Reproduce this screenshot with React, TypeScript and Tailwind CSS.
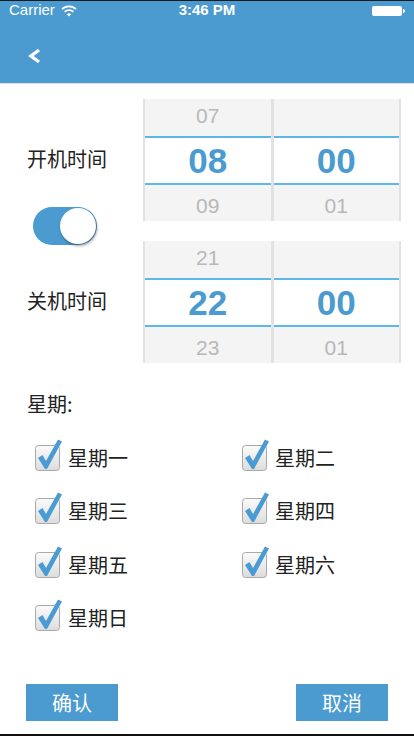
import React from "react";

function Check() {
  return (
    <svg width="30" height="34" viewBox="0 0 30 34" className="shrink-0">
      <defs>
        <linearGradient id="cbg" x1="0" y1="0" x2="0" y2="1">
          <stop offset="0" stopColor="#fbfbfb" />
          <stop offset="1" stopColor="#dcdcdc" />
        </linearGradient>
      </defs>
      <rect x="1.5" y="7.5" width="24" height="25" rx="3" fill="url(#cbg)" stroke="#a9a9a9" strokeWidth="1" />
      <path d="M4 20 L8.5 17 L12 23 L24 1.5 L28 3.5 L13 31 L11 31 Z" fill="#4a9bd3" />
    </svg>
  );
}

function Picker({ top, sel, bottom, min, minBottom, minTop }: { top: string; sel: string; bottom: string; min: string; minBottom: string; minTop: string }) {
  const col = (t: string, s: string, b: string) => (
    <div className="flex flex-1 flex-col">
      <div className="flex h-[37px] items-center justify-center bg-[#f4f4f4] pb-[4px] text-[21px] text-[#b8b8b8]">{t}</div>
      <div className="h-[2px] bg-[#5bb9e9]" />
      <div className="flex h-[45px] items-center justify-center bg-white text-[35px] font-bold leading-none text-[#4a9bd0]">{s}</div>
      <div className="h-[2px] bg-[#5bb9e9]" />
      <div className="flex h-[36px] items-center justify-center bg-[#f4f4f4] pt-[6px] text-[21px] text-[#b8b8b8]">{b}</div>
    </div>
  );
  return (
    <div className="flex h-[122px] w-[258px] gap-[3px] border-x-2 border-[#e2e2e2] bg-[#e2e2e2]" style={{ fontFamily: '"Liberation Sans", Arial, sans-serif' }}>
      {col(top, sel, bottom)}
      {col(minTop, min, minBottom)}
    </div>
  );
}

export default function App() {
  const days = ["星期一", "星期二", "星期三", "星期四", "星期五", "星期六", "星期日"];
  return (
    <div className="flex h-[736px] w-[414px] flex-col overflow-hidden bg-white" style={{ fontFamily: '"Noto Sans CJK SC", "Liberation Sans", sans-serif' }}>
      <div className="h-px bg-[#1a1a1a]" />
      <div className="flex h-[82px] flex-col bg-[#4b9bd0]">
        <div className="relative flex h-[19px] items-center px-[9px] text-[15px] text-white" style={{ fontFamily: '"Liberation Sans", Arial, sans-serif' }}>
          <span>Carrier</span>
          <svg width="16" height="12" viewBox="0 0 16 12" className="ml-[6px]">
            <path d="M1 4.2 A10 10 0 0 1 15 4.2" stroke="white" strokeWidth="1.8" fill="none" />
            <path d="M3.6 6.8 A6.5 6.5 0 0 1 12.4 6.8" stroke="white" strokeWidth="1.8" fill="none" />
            <path d="M8 11.5 L5.8 9.2 A3.2 3.2 0 0 1 10.2 9.2 Z" fill="white" />
          </svg>
          <span className="absolute left-0 right-0 text-center font-bold">3:46 PM</span>
          <div className="ml-auto flex items-center">
            <div className="h-[10px] w-[30px] rounded-[2px] bg-white" />
            <div className="ml-px h-[4px] w-[2px] rounded-r-sm bg-white" />
          </div>
        </div>
        <div className="flex flex-1 items-center pl-[26px] pt-[8px]">
          <svg width="16" height="16" viewBox="0 0 16 16">
            <path d="M13 2 L5 8 L13 14" stroke="white" strokeWidth="3.4" fill="none" strokeLinejoin="miter" />
          </svg>
        </div>
      </div>
      <div className="h-px bg-[#dcdcdc]" />

      <div className="mt-[15px] flex">
        <div className="flex w-[143px] flex-col pl-[27px]">
          <div className="mt-[46px] text-[20px] leading-[28px] text-[#222]">开机时间</div>
          <div className="ml-[6px] mt-[34px] flex h-[38px] w-[64px] items-center justify-end rounded-full bg-[#4b9bd0] pr-px">
            <div className="h-[36px] w-[36px] rounded-full bg-white shadow-[1px_2px_3px_rgba(0,0,0,0.35)]" />
          </div>
          <div className="mt-[42px] text-[20px] leading-[28px] text-[#222]">关机时间</div>
        </div>
        <div className="flex flex-col gap-[20px]">
          <Picker top="07" sel="08" bottom="09" minTop="" min="00" minBottom="01" />
          <Picker top="21" sel="22" bottom="23" minTop="" min="00" minBottom="01" />
        </div>
      </div>

      <div className="mt-[27px] pl-[27px] text-[20px] leading-[28px] text-[#222]">星期:</div>

      <div className="mt-[13px] grid grid-cols-[207px_1fr] pl-[34px]">
        {days.map((d) => (
          <div key={d} className="flex h-[53.5px] items-center">
            <div className="-mt-[6px]">
              <Check />
            </div>
            <span className="ml-[4px] text-[20px] text-[#222]">{d}</span>
          </div>
        ))}
      </div>

      <div className="mt-auto flex justify-between px-[26px] pb-[13px]">
        <button className="h-[37px] w-[92px] bg-[#4b9bd0] text-[20px] text-white">确认</button>
        <button className="h-[37px] w-[92px] bg-[#4b9bd0] text-[20px] text-white">取消</button>
      </div>
      <div className="h-[2px] bg-[#111]" />
    </div>
  );
}
